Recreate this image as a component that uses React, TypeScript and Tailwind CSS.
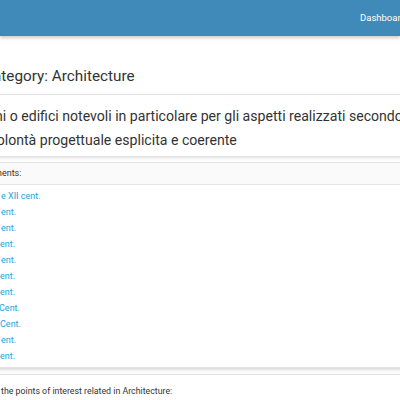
const monuments = [
  { label: 'e XII cent.', shift: 0 },
  { label: 'ent.', shift: 0 },
  { label: 'ent.', shift: 0 },
  { label: 'ent.', shift: -1 },
  { label: 'ent.', shift: 0 },
  { label: 'ent.', shift: -1 },
  { label: 'ent.', shift: -1 },
  { label: 'Cent.', shift: -2 },
  { label: 'Cent.', shift: -1 },
  { label: 'ent.', shift: 0 },
  { label: 'ent.', shift: -1 },
];

export default function App() {
  return (
    <div className="w-[400px] h-[400px] overflow-hidden bg-white text-[#333] font-['Roboto',sans-serif]">
      {/* Top navbar */}
      <div className="h-[36px] bg-[#3f8ab8] shadow-[0_2px_3px_rgba(0,0,0,0.2)] flex items-center relative z-10">
        <span className="ml-[360px] text-white text-[9.5px] whitespace-nowrap">Dashboard</span>
      </div>

      <div className="w-[520px] -ml-[17px]">
        {/* Category title */}
        <h1 className="mt-[28px] text-[15.3px] leading-[24px] whitespace-nowrap">Category: Architecture</h1>

        {/* Description */}
        <div className="mt-[6px] border border-[#e3e3e3] shadow-[0_1px_3px_rgba(0,0,0,0.12)] pt-[9px] pb-[4px] pl-[13px]">
          <p className="text-[14.1px] leading-[24px] whitespace-nowrap">
            <span className="inline-block -ml-[2px]">ni o edifici notevoli in particolare per gli aspetti realizzati secondo una</span>
            <br />
            <span className="inline-block -ml-[7px]">volontà progettuale esplicita e coerente</span>
          </p>
        </div>

        {/* Monuments list */}
        <div className="mt-[5px] border border-[#e3e3e3] shadow-[0_2px_3px_rgba(0,0,0,0.15)]">
          <div className="h-[22px] bg-[#fafafa] border-b border-[#e6e6e6] flex items-center pl-[14px]">
            <span className="text-[9px] -ml-[4px]">ments:</span>
          </div>
          <ul className="pt-[4px] pb-[2px] pl-[17px]">
            {monuments.map((m, i) => (
              <li key={i} className="h-[16px] flex items-center">
                <a className="text-[9px] text-[#2a9fd6]" style={{ marginLeft: m.shift }}>
                  {m.label}
                </a>
              </li>
            ))}
          </ul>
        </div>

        {/* Points of interest */}
        <div className="mt-[6px] border border-[#e3e3e3] shadow-[0_1px_3px_rgba(0,0,0,0.12)]">
          <div className="h-[24px] bg-white flex items-end pl-[17px] pb-[1px]">
            <span className="text-[8.8px] whitespace-nowrap">the points of interest related in Architecture:</span>
          </div>
          <div className="h-[20px] pl-[140px] text-[8.8px] leading-[12px] text-[#7fc0e8] whitespace-nowrap">
            Monumenti romanici &nbsp;&nbsp;&nbsp;&nbsp; Castelli medievali &nbsp;&nbsp; Palazzi
          </div>
        </div>
      </div>
    </div>
  );
}
